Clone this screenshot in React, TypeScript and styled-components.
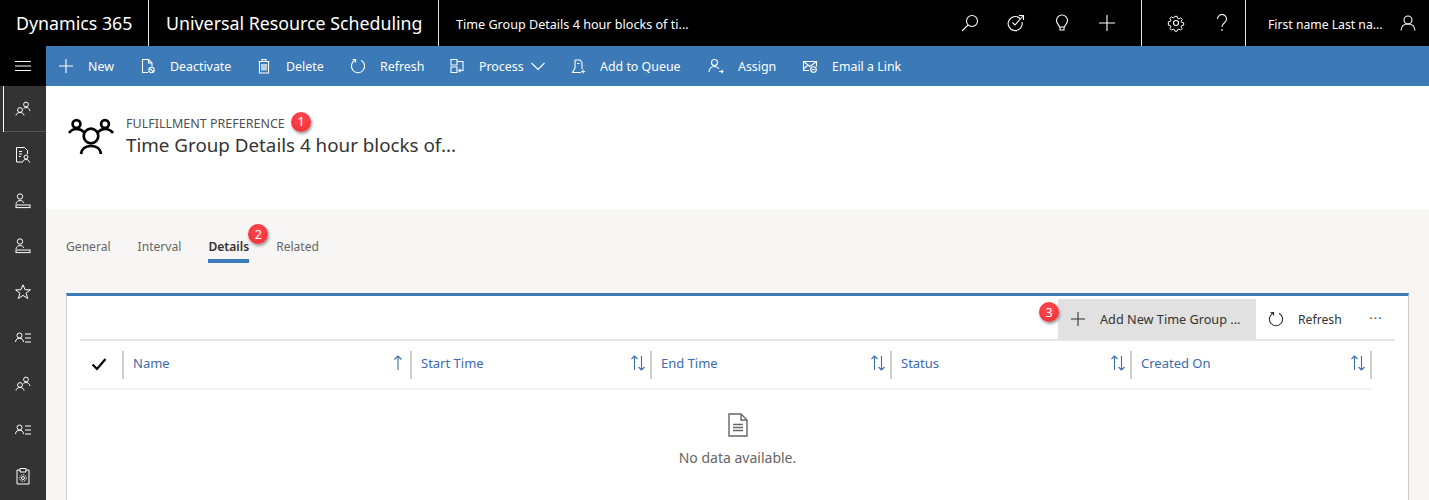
import { ReactNode } from "react";
import styled, { createGlobalStyle } from "styled-components";

const GlobalStyle = createGlobalStyle`
  html, body {
    margin: 0;
    padding: 0;
    background: #f7f6f4;
    overflow: hidden;
  }
  body {
    font-family: "Noto Sans", "Open Sans", "Liberation Sans", sans-serif;
  }
  * {
    box-sizing: border-box;
  }
`;

const Page = styled.div`
  width: 1429px;
  height: 500px;
  display: flex;
  flex-direction: column;
  overflow: hidden;
`;

const TopBar = styled.header`
  height: 46px;
  flex: none;
  display: flex;
  align-items: stretch;
  background: #000;
  color: #fff;
`;

const TopCell = styled.div<{ $width: number; $divider?: boolean; $pad?: number }>`
  width: ${(p) => p.$width}px;
  flex: none;
  display: flex;
  align-items: center;
  padding-left: ${(p) => p.$pad ?? 0}px;
  border-right: ${(p) => (p.$divider ? "1px solid #e8e8e8" : "none")};
  white-space: nowrap;
`;

const Brand = styled.span`
  font-size: 17.8px;
  margin-top: -1px;
`;

const RecordName = styled.span`
  font-size: 12.6px;
  margin-top: 2px;
`;

const UserName = styled.span`
  font-size: 12.2px;
  width: 132px;
  margin-top: 2px;
`;

const TopIcon = styled.div<{ $width: number }>`
  width: ${(p) => p.$width}px;
  flex: none;
  display: flex;
  justify-content: center;
  align-items: center;
`;

const Body = styled.div`
  flex: 1;
  display: flex;
  min-height: 0;
`;

const Rail = styled.nav`
  width: 46px;
  flex: none;
  background: #333;
  color: #fff;
`;

const Burger = styled.div`
  height: 40px;
  background: #000;
  display: flex;
  align-items: center;
  justify-content: center;
`;

const RailItem = styled.div<{ $active?: boolean }>`
  height: 45.85px;
  display: flex;
  align-items: center;
  justify-content: center;
  box-shadow: ${(p) => (p.$active ? "inset 3px 0 #333, inset 4px 0 #fff, inset 0 -1px #555" : "none")};
`;

const Main = styled.main`
  flex: 1;
  min-width: 0;
  display: flex;
  flex-direction: column;
`;

const CommandBar = styled.div`
  height: 40px;
  flex: none;
  display: flex;
  align-items: center;
  padding-left: 10px;
  background: #3b79b7;
  color: #fff;
`;

const Command = styled.div<{ $width: number }>`
  width: ${(p) => p.$width}px;
  flex: none;
  display: flex;
  align-items: center;
  font-size: 12.4px;
  white-space: nowrap;
`;

const CommandIcon = styled.span`
  width: 20px;
  height: 20px;
  margin-right: 12px;
  display: flex;
  align-items: center;
  justify-content: center;
`;

const Chevron = styled.span`
  display: flex;
  margin-left: 6px;
`;

const RecordHeader = styled.section`
  height: 123px;
  flex: none;
  display: flex;
  align-items: flex-start;
  gap: 11px;
  padding: 31px 0 0 22px;
  background: #fff;
`;

const Titles = styled.div`
  display: flex;
  flex-direction: column;
`;

const EntityRow = styled.div`
  position: relative;
  width: fit-content;
  font-size: 12.5px;
  line-height: 14px;
  color: #505050;
`;

const RecordTitle = styled.div`
  font-size: 18.8px;
  line-height: 27px;
  margin-top: 1px;
  color: #333;
`;

const Badge = styled.span<{ $left: number; $top: number }>`
  position: absolute;
  left: ${(p) => p.$left}px;
  top: ${(p) => p.$top}px;
  width: 20px;
  height: 20px;
  border-radius: 50%;
  display: flex;
  align-items: center;
  justify-content: center;
  background: radial-gradient(circle at 50% 35%, #ff4a50, #ee2b33);
  box-shadow: 1px 2px 3px rgba(0, 0, 0, 0.4);
  color: #fff;
  font-size: 12.5px;
  font-weight: 400;
  letter-spacing: 0;
`;

const Content = styled.section`
  flex: 1;
  min-height: 0;
  background: #f7f6f4;
  padding: 0 20px;
`;

const Tabs = styled.div`
  height: 84px;
  display: flex;
  gap: 27px;
  padding-top: 24px;
`;

const Tab = styled.div<{ $active?: boolean }>`
  position: relative;
  height: 30px;
  line-height: 27px;
  font-size: 12.1px;
  font-weight: ${(p) => (p.$active ? 600 : 400)};
  color: ${(p) => (p.$active ? "#333" : "#666")};
  border-bottom: 4px solid ${(p) => (p.$active ? "#3b79b7" : "transparent")};
`;

const Card = styled.div`
  width: 1343px;
  height: 300px;
  background: #fff;
  border-top: 3px solid #3b79b7;
  border-left: 1px solid #ccc;
  border-right: 1px solid #ccc;
  padding: 3px 13px 0;
`;

const GridToolbar = styled.div`
  height: 42px;
  display: flex;
  justify-content: flex-end;
  align-items: stretch;
  border-bottom: 2px solid #e6e6e6;
`;

const ToolButton = styled.div<{ $hover?: boolean; $width: number }>`
  position: relative;
  width: ${(p) => p.$width}px;
  display: flex;
  align-items: center;
  padding-left: 12px;
  white-space: nowrap;
  color: #333;
  background: ${(p) => (p.$hover ? "#e1e1e1" : "transparent")};
`;

const ToolLabel = styled.span<{ $size: number }>`
  font-size: ${(p) => p.$size}px;
`;

const ToolIcon = styled.span`
  width: 16px;
  display: flex;
  justify-content: center;
  margin-right: 14px;
`;

const More = styled.div`
  width: 38px;
  display: flex;
  align-items: center;
  justify-content: center;
  padding-bottom: 2px;
  font-size: 13px;
  letter-spacing: 1px;
  color: #444;
`;

const HeaderRow = styled.div`
  width: 1292px;
  height: 49px;
  display: grid;
  grid-template-columns: 44px 288px 240px 240px 240px 240px;
  align-items: center;
  border-bottom: 2px solid #f0f0f0;
`;

const CheckCell = styled.div`
  height: 28px;
  display: flex;
  align-items: center;
  justify-content: center;
  padding-right: 4px;
  padding-bottom: 2px;
  border-right: 2px solid #ccc;
`;

const ColumnCell = styled.div`
  height: 28px;
  display: flex;
  align-items: center;
  justify-content: space-between;
  padding: 0 4px 3px 9px;
  font-size: 13px;
  color: #3b6cab;
  border-right: 2px solid #ccc;
`;

const EmptyState = styled.div`
  width: 1315px;
  padding: 23px 0 0;
  display: flex;
  flex-direction: column;
  align-items: center;
  gap: 11px;
  font-size: 14px;
  color: #666;
`;

const EmptyIcon = styled.span`
  display: flex;
  color: #666;
`;

type GlyphProps = { size?: number; children: ReactNode; width?: number; height?: number; stroke?: number };

function Glyph({ size = 16, width, height, stroke = 1.1, children }: GlyphProps) {
  return (
    <svg
      width={width ?? size}
      height={height ?? size}
      viewBox={`0 0 ${width ?? size} ${height ?? size}`}
      fill="none"
      stroke="currentColor"
      strokeWidth={stroke}
    >
      {children}
    </svg>
  );
}

const Plus = () => (
  <Glyph>
    <path d="M8 1v14M1 8h14" />
  </Glyph>
);

const RefreshGlyph = () => (
  <Glyph>
    <path d="M5 2.2a6.6 6.6 0 1 0 6 0" />
    <path d="M2.6 1.6h3v3" />
  </Glyph>
);

const TwoPeople = () => (
  <Glyph size={18} stroke={1}>
    <circle cx="6" cy="10" r="2.4" />
    <path d="M2 15.5c.3-2 1.800-3 4-3s3.700 1 4 3" />
    <circle cx="12" cy="4.5" r="2.4" />
    <path d="M9.500 8.500c.8-.7 1.600-1 2.500-1 2 0 3.500 1.200 4 3.500" />
  </Glyph>
);

const PersonList = () => (
  <Glyph size={18} stroke={1}>
    <circle cx="5.5" cy="6.5" r="2.5" />
    <path d="M1.500 13c.3-2.500 1.800-3.800 4-3.800s3.700 1.300 4 3.800" />
    <path d="M11 5h6M11 9h6M11 13h6" />
  </Glyph>
);

const PersonDesk = () => (
  <Glyph size={18} stroke={1}>
    <circle cx="6" cy="4.5" r="2.7" />
    <path d="M2 12c.3-2.200 1.800-3.400 4-3.400s3.400.8 3.800 2.400" />
    <rect x="2" y="13" width="14" height="2.6" />
  </Glyph>
);

const DocPerson = () => (
  <Glyph size={18} stroke={1}>
    <path d="M8 16H2.500V1.500h8l3 3V8" />
    <path d="M5 5.500h3M5 8h3M5 10.500h2" />
    <circle cx="12" cy="11" r="2" />
    <path d="M8.500 16.500c.3-2 1.500-3 3.500-3s3.200 1 3.500 3" />
  </Glyph>
);

const ClipboardGear = () => (
  <Glyph size={18} stroke={1}>
    <path d="M6 3H3v14h12V3h-3" />
    <path d="M6 1.500h6V5H6z" />
    <circle cx="9" cy="11" r="1.5" />
    <circle cx="9" cy="11" r="3.3" strokeDasharray="1.5 1" />
  </Glyph>
);

const railIcons = [
  <TwoPeople />,
  <DocPerson />,
  <PersonDesk />,
  <PersonDesk />,
  <Glyph size={18} stroke={1}>
    <path d="M9 1.800l2.100 5h5.300l-4.300 3.400 1.600 5.300L9 12.400l-4.700 3.100 1.600-5.300L1.600 6.800h5.300z" />
  </Glyph>,
  <PersonList />,
  <TwoPeople />,
  <PersonList />,
  <ClipboardGear />,
];

const commands: { label: string; width: number; icon: ReactNode; chevron?: boolean }[] = [
  { label: "New", width: 82, icon: <Plus /> },
  {
    label: "Deactivate",
    width: 116,
    icon: (
      <Glyph>
        <path d="M8 14.500H2.500V1.500h6l3.500 3.500v3.500" />
        <path d="M8.500 1.500V5H12" />
        <circle cx="11.5" cy="12" r="2.7" />
        <path d="M9.700 10.200l3.600 3.600" />
      </Glyph>
    ),
  },
  {
    label: "Delete",
    width: 94,
    icon: (
      <Glyph>
        <path d="M2.500 3.500h11M6 3.500V1.500h4v2M3.500 3.500v11.500h9V3.500" />
        <path d="M6 6v6.500M8 6v6.500M10 6v6.500" strokeWidth="1.300" />
      </Glyph>
    ),
  },
  { label: "Refresh", width: 99, icon: <RefreshGlyph /> },
  {
    label: "Process",
    width: 121,
    chevron: true,
    icon: (
      <Glyph>
        <path d="M2 1.500h6v5.500H2zM2 9h6v5.500H2zM8 3.500h6v6" />
        <path d="M14 9.500v3h-4M11.500 10.800l-1.800 1.700 1.800 1.700" />
      </Glyph>
    ),
  },
  {
    label: "Add to Queue",
    width: 138,
    icon: (
      <Glyph>
        <path d="M5 2h5l2 2.500V11M5 2v8L2.500 14.500h8.500" />
        <path d="M7 5.500h2.500M13 11.500v4M11 13.500h4" />
      </Glyph>
    ),
  },
  {
    label: "Assign",
    width: 94,
    icon: (
      <Glyph>
        <circle cx="6.5" cy="4.5" r="3" />
        <path d="M1 14c.3-3.500 2.500-5.500 5.500-5.500 2 0 3.500.8 4.500 2.500" />
        <path d="M11 13.500h4M13.500 12l1.500 1.500-1.500 1.500" />
      </Glyph>
    ),
  },
  {
    label: "Email a Link",
    width: 110,
    icon: (
      <Glyph>
        <path d="M7 12.500H1.500v-9h13v5" />
        <path d="M1.500 3.500L8 8.500l6.500-5M1.500 11L5.500 7.500" />
        <circle cx="11.5" cy="11.500" r="2.8" />
        <path d="M9.800 11.500h3.400" />
      </Glyph>
    ),
  },
];

const columns = ["Name", "Start Time", "End Time", "Status", "Created On"];

const SortBoth = () => (
  <Glyph width={16} height={18}>
    <path d="M4.500 16V2M1.500 5l3-3 3 3" />
    <path d="M11.500 2v14M8.500 13l3 3 3-3" />
  </Glyph>
);

const SortUp = () => (
  <Glyph width={13} height={18}>
    <path d="M5 16V2M1.500 5.500L5 2l3.500 3.500" />
  </Glyph>
);

export default function App() {
  return (
    <>
      <GlobalStyle />
      <Page>
        <TopBar>
          <TopCell $width={149} $divider $pad={16}>
            <Brand>Dynamics 365</Brand>
          </TopCell>
          <TopCell $width={290} $divider $pad={17}>
            <Brand>Universal Resource Scheduling</Brand>
          </TopCell>
          <TopCell $width={508} $pad={17}>
            <RecordName>Time Group Details 4 hour blocks of ti...</RecordName>
          </TopCell>
          <TopIcon $width={46}>
            <Glyph size={18}>
              <circle cx="11" cy="7" r="5.5" />
              <path d="M7 11l-6 6" />
            </Glyph>
          </TopIcon>
          <TopIcon $width={46}>
            <Glyph size={18}>
              <path d="M13 4.500A7 7 0 1 0 15 8" />
              <path d="M5.500 8.500L8 11l8-9M12 1.500h4.500V6" />
            </Glyph>
          </TopIcon>
          <TopIcon $width={45}>
            <Glyph size={18}>
              <path d="M6.500 13C6 10.500 3.500 9.800 3.500 6.500a5.500 5.500 0 0 1 11 0c0 3.300-2.500 4-3 6.500z" />
              <path d="M7 13v3h4v-3" />
            </Glyph>
          </TopIcon>
          <TopIcon $width={46}>
            <Glyph size={18}>
              <path d="M9 1v16M1 9h16" />
            </Glyph>
          </TopIcon>
          <TopCell $width={12} $divider />
          <TopIcon $width={68}>
            <Glyph size={18}>
              <circle cx="9" cy="9" r="2.5" />
              <path
                d="M7.700 1.500h2.600l.4 2.200 1.500.7 1.900-1.200 1.800 1.800-1.200 1.900.7 1.500 2.200.4v2.600l-2.200.4-.7 1.500 1.200 1.900-1.800 1.800-1.900-1.200-1.500.7-.4 1.700H7.700l-.4-1.700-1.500-.7-1.900 1.200-1.800-1.800 1.200-1.900-.7-1.500-2.200-.4V7.600l2.200-.4.700-1.500-1.200-1.900 1.800-1.800 1.900 1.200 1.500-.7z"
                transform="translate(1 1) scale(.89)"
              />
            </Glyph>
          </TopIcon>
          <TopIcon $width={24}>
            <Glyph width={12} height={18}>
              <path d="M1.500 5a4.500 4.500 0 1 1 7 3.700C6.800 9.800 6 10.800 6 13M6 15v2" />
            </Glyph>
          </TopIcon>
          <TopCell $width={12} $divider />
          <TopCell $width={183} $pad={22}>
            <UserName>First name Last na...</UserName>
            <Glyph size={16}>
              <circle cx="8" cy="5" r="4" />
              <path d="M1 15.500c.3-4 3-6.500 7-6.500s6.700 2.500 7 6.500" />
            </Glyph>
          </TopCell>
        </TopBar>
        <Body>
          <Rail>
            <Burger>
              <Glyph>
                <path d="M0 3.500h16M0 8h16M0 12.500h16" />
              </Glyph>
            </Burger>
            {railIcons.map((icon, i) => (
              <RailItem key={i} $active={i === 0}>
                {icon}
              </RailItem>
            ))}
          </Rail>
          <Main>
            <CommandBar>
              {commands.map((c) => (
                <Command key={c.label} $width={c.width}>
                  <CommandIcon>{c.icon}</CommandIcon>
                  {c.label}
                  {c.chevron && (
                    <Chevron>
                      <Glyph>
                        <path d="M1.500 5l6.500 6.500L14.500 5" />
                      </Glyph>
                    </Chevron>
                  )}
                </Command>
              ))}
            </CommandBar>
            <RecordHeader>
              <Glyph width={47} height={38} stroke={2.7}>
                <circle cx="8.500" cy="7" r="3.900" />
                <circle cx="37" cy="7" r="3.900" />
                <circle cx="23" cy="19" r="7.300" />
                <path d="M1 16c2-2.700 4.500-4 7.500-4 3 0 5.500 1 7.500 3" />
                <path d="M45 16c-2-2.700-4.500-4-8-4-3 0-5 1-7 3" />
                <path d="M13 37c.5-5 4.500-8 10-8s9.500 3 10 8" />
              </Glyph>
              <Titles>
                <EntityRow>
                  FULFILLMENT PREFERENCE
                  <Badge $left={165} $top={-5}>1</Badge>
                </EntityRow>
                <RecordTitle>Time Group Details 4 hour blocks of...</RecordTitle>
              </Titles>
            </RecordHeader>
            <Content>
              <Tabs>
                <Tab>General</Tab>
                <Tab>Interval</Tab>
                <Tab $active>
                  Details
                  <Badge $left={40} $top={-9}>2</Badge>
                </Tab>
                <Tab>Related</Tab>
              </Tabs>
              <Card>
                <GridToolbar>
                  <ToolButton $hover $width={198}>
                    <Badge $left={-19} $top={3}>3</Badge>
                    <ToolIcon>
                      <Plus />
                    </ToolIcon>
                    <ToolLabel $size={12.7}>Add New Time Group ...</ToolLabel>
                  </ToolButton>
                  <ToolButton $width={101}>
                    <ToolIcon>
                      <RefreshGlyph />
                    </ToolIcon>
                    <ToolLabel $size={12.2}>Refresh</ToolLabel>
                  </ToolButton>
                  <More>···</More>
                </GridToolbar>
                <HeaderRow>
                  <CheckCell>
                    <Glyph width={16} height={14} stroke={2.2}>
                      <path d="M1.500 7.500l4.500 4.500 8.500-10" />
                    </Glyph>
                  </CheckCell>
                  {columns.map((name, i) => (
                    <ColumnCell key={name}>
                      {name}
                      {i === 0 ? <SortUp /> : <SortBoth />}
                    </ColumnCell>
                  ))}
                </HeaderRow>
                <EmptyState>
                  <EmptyIcon>
                    <Glyph width={20} height={24} stroke={1.4}>
                      <path d="M1 1h12l6 6v16H1z" />
                      <path d="M13 1v6h6" />
                      <path d="M5 11.500h10M5 14.500h10M5 17.500h10" />
                    </Glyph>
                  </EmptyIcon>
                  No data available.
                </EmptyState>
              </Card>
            </Content>
          </Main>
        </Body>
      </Page>
    </>
  );
}
